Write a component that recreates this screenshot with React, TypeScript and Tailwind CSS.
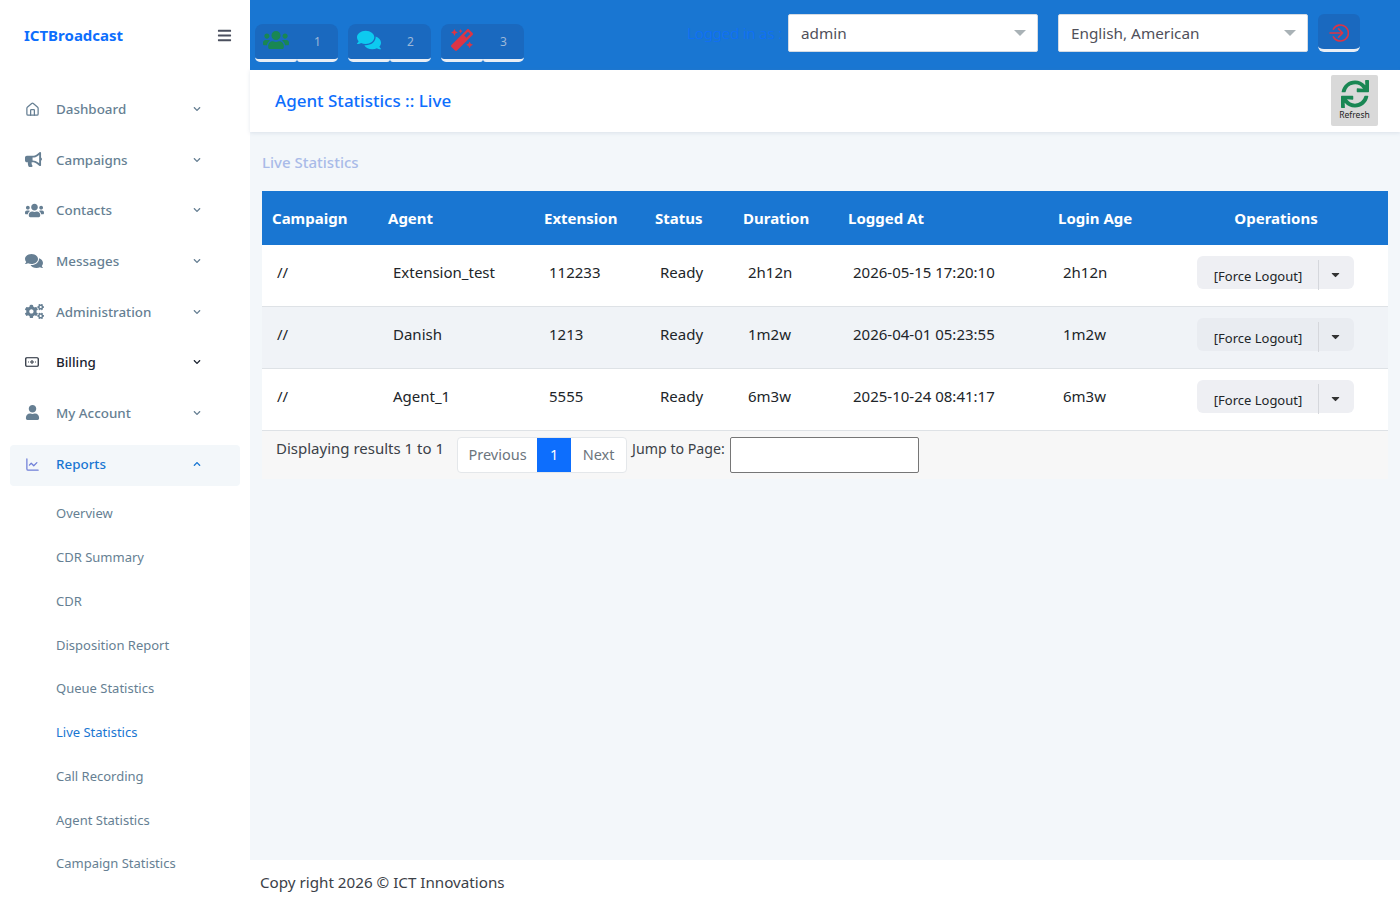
import React from "react";
import { FaBullhorn, FaUsers, FaComments, FaCogs, FaUser, FaMagic, FaSync, FaBars, FaChevronDown, FaChevronUp, FaCaretDown } from "react-icons/fa";
import { LuHouse, LuChartLine } from "react-icons/lu";

const FONT = "font-['Noto_Sans',sans-serif]";

function Billing({ className }: { className?: string }) {
  return (
    <svg viewBox="0 0 14 10" className={className} fill="none" stroke="currentColor">
      <rect x="0.75" y="0.75" width="12.5" height="8.5" rx="1" strokeWidth="1.2" />
      <circle cx="7" cy="5" r="1.2" strokeWidth="1" />
      <path d="M3 5h.8M10.2 5h.8" strokeWidth="1" />
    </svg>
  );
}

function LogoutIcon({ className }: { className?: string }) {
  return (
    <svg viewBox="0 0 20 20" className={className} fill="none" stroke="currentColor" strokeWidth="1.6" strokeLinecap="round" strokeLinejoin="round">
      <path d="M4.4 6.2A8 8 0 1 1 4.4 13.8" />
      <path d="M1 10h12.5M9.5 5.8l4.2 4.2-4.2 4.2" />
    </svg>
  );
}

const nav = [
  { label: "Dashboard", icon: <LuHouse className="w-[15px] h-[15px]" />, },
  { label: "Campaigns", icon: <FaBullhorn className="w-[17px] h-[17px]" /> },
  { label: "Contacts", icon: <FaUsers className="w-[19px] h-[19px]" /> },
  { label: "Messages", icon: <FaComments className="w-[18px] h-[18px]" /> },
  { label: "Administration", icon: <FaCogs className="w-[19px] h-[19px]" /> },
  { label: "Billing", icon: <Billing className="w-[14px] h-[10px]" />, dark: true },
  { label: "My Account", icon: <FaUser className="w-[15px] h-[15px]" /> },
];

const sub = ["Overview", "CDR Summary", "CDR", "Disposition Report", "Queue Statistics", "Live Statistics", "Call Recording", "Agent Statistics", "Campaign Statistics"];

const rows = [
  ["Extension_test", "112233", "Ready", "2h12n", "2026-05-15 17:20:10", "2h12n"],
  ["Danish", "1213", "Ready", "1m2w", "2026-04-01 05:23:55", "1m2w"],
  ["Agent_1", "5555", "Ready", "6m3w", "2025-10-24 08:41:17", "6m3w"],
];

const cols = ["w-[116px]", "w-[156px]", "w-[111px]", "w-[88px]", "w-[105px]", "w-[210px]", "w-[124px]"];

function Pill({ icon, n }: { icon: React.ReactNode; n: string }) {
  return (
    <div className="flex h-[38px]">
      <div className="w-[42px] flex items-center justify-center bg-[#1a69bf] rounded-l-lg rounded-bl-[5px] rounded-br-[3px] border-b-[3px] border-[#e9eef5] pb-1">{icon}</div>
      <div className="w-[41px] flex items-center justify-center bg-[#1a69bf] rounded-r-lg rounded-br-[5px] rounded-bl-[3px] border-b-[3px] border-[#e9eef5] text-[12px] text-[#9db8d8] pt-[1px]">{n}</div>
    </div>
  );
}

function Select({ value }: { value: string }) {
  return (
    <div className="w-[250px] h-[38px] bg-white rounded-[2px] border border-[#d5dbe3] flex items-center justify-between pl-3 pr-[11px] text-[15.3px] text-[#50505a]">
      <span>{value}</span>
      <span className="w-0 h-0 border-l-[6px] border-r-[6px] border-t-[6px] border-l-transparent border-r-transparent border-t-[#a9b2b6]" />
    </div>
  );
}

export default function App() {
  return (
    <div className={`${FONT} flex w-[1400px] h-[900px] overflow-hidden bg-[#f3f7fa]`}>
      <aside className="w-[250px] shrink-0 bg-white flex flex-col">
        <div className="h-[70px] shrink-0 flex items-center justify-between pl-[24px] pr-[18px]">
          <span className="text-[15px] font-bold text-[#0d6efd]">ICTBroadcast</span>
          <FaBars className="w-[15px] h-[15px] text-[#4a4f5e]" />
        </div>
        <nav className="px-[10px] pt-[14px] flex flex-col">
          {nav.map((n) => (
            <div key={n.label} className={`h-[50.6px] flex items-center pl-[15px] pr-[39px] text-[13.4px] font-medium ${n.dark ? "text-[#1b2330]" : "text-[#667f93]"}`}>
              <span className="w-[31px] flex items-center">{n.icon}</span>
              <span className="flex-1">{n.label}</span>
              <FaChevronDown className="w-[8px] h-[8px]" />
            </div>
          ))}
          <div className="h-[41px] mt-[7px] pb-[3px] rounded bg-[#f3f7fa] flex items-center pl-[15px] pr-[39px] text-[13.4px] font-medium text-[#1976d2]">
            <span className="w-[31px] flex items-center text-[#6f7fd8]"><LuChartLine className="w-[15px] h-[15px]" /></span>
            <span className="flex-1">Reports</span>
            <FaChevronUp className="w-[8px] h-[8px]" />
          </div>
          <div className="pt-[6px] flex flex-col">
            {sub.map((s) => (
              <div key={s} className={`h-[43.75px] flex items-center pl-[46px] text-[13px] ${s === "Live Statistics" ? "text-[#1976d2]" : "text-[#667f93]"}`}>{s}</div>
            ))}
          </div>
        </nav>
      </aside>

      <div className="flex-1 min-w-0 flex flex-col">
        <header className="h-[70px] shrink-0 bg-[#1976d2] flex items-center pl-[5px] pr-[40px]">
          <div className="flex gap-[10px] pt-[16px]">
            <Pill icon={<FaUsers className="w-[26px] h-[26px] text-[#198754]" />} n="1" />
            <Pill icon={<FaComments className="w-[24px] h-[24px] text-[#0dcaf0]" />} n="2" />
            <Pill icon={<FaMagic className="w-[22px] h-[22px] text-[#dc3545]" />} n="3" />
          </div>
          <div className="flex-1 text-right pr-[6px] mb-[4px] text-[15px] text-[#0d6efd] font-light">Logged in as :</div>
          <div className="flex items-center gap-[20px] mb-[4px]">
            <Select value="admin" />
            <Select value="English, American" />
          </div>
          <div className="ml-[10px] mb-[4px] pt-[3px] w-[42px] h-[38px] flex items-center justify-center bg-[#1a69bf] rounded-md border-b-[3px] border-[#e9eef5]">
            <LogoutIcon className="w-[20px] h-[20px] text-[#dc3545]" />
          </div>
        </header>

        <div className="h-[62px] shrink-0 bg-white flex items-center justify-between pl-[25px] pr-[22px] shadow-[0_1px_4px_rgba(120,140,170,0.2)]">
          <h1 className="text-[17px] font-medium text-[#0d6efd]">Agent Statistics :: Live</h1>
          <div className="w-[47px] h-[51px] -mt-[1px] bg-[#d9d9d9] rounded-[2px] flex flex-col items-center justify-center">
            <FaSync className="w-[28px] h-[28px] text-[#198754] -mt-[1px]" />
            <span className="text-[8.5px] text-[#222] mt-[1px] leading-[11px]">Refresh</span>
          </div>
        </div>

        <main className="flex-1 min-h-0 pl-[12px] pr-[12px]">
          <h2 className="h-[59px] pt-[19px] text-[15px] font-medium text-[#a9bbe8]">Live Statistics</h2>
          <div className="w-[1126px]">
            <div className="h-[54px] bg-[#1976d2] flex items-center text-[15px] font-bold text-white">
              {["Campaign", "Agent", "Extension", "Status", "Duration", "Logged At", "Login Age"].map((h, i) => (
                <div key={h} className={`${cols[i]} pl-[10px] shrink-0`}>{h}</div>
              ))}
              <div className="flex-1 text-center pr-[8px]">Operations</div>
            </div>
            {rows.map((r, idx) => (
              <div key={r[0]} className={`h-[62px] flex items-center border-b border-[#dee2e6] text-[15px] text-[#212529] pb-[7px] ${idx === 1 ? "bg-[#f0f3f7]" : "bg-white"}`}>
                <div className={`${cols[0]} pl-[15px] shrink-0`}>//</div>
                {r.map((c, i) => (
                  <div key={i} className={`${cols[i + 1]} pl-[15px] shrink-0`}>{c}</div>
                ))}
                <div className="flex-1 flex pl-[25px]">
                  <div className={`w-[157px] h-[33px] rounded-md flex items-center text-[13px] text-[#212529] ${idx === 1 ? "bg-[#e9ecf1]" : "bg-[#eeeff3]"}`}>
                    <span className="flex-1 text-center pt-[9px] pl-[1px]">[Force Logout]</span>
                    <span className="w-[36px] h-[30px] border-l border-[#d5d7dc] flex items-center justify-center mt-[5px] pr-[2px]">
                      <FaCaretDown className="w-[13px] h-[13px] text-[#333] -mt-[1px]" />
                    </span>
                  </div>
                </div>
              </div>
            ))}
            <div className="h-[48px] bg-[#f7f7f7] flex items-start text-[15px] text-[#3b4148] pl-[14px]">
              <span className="pt-[6px]">Displaying results 1 to 1</span>
              <div className="ml-[13px] mt-[6px] h-[36px] flex items-stretch rounded border border-[#e4e7ea] bg-white text-[14.5px] text-[#6c757d] overflow-hidden">
                <span className="w-[79px] flex items-center justify-center">Previous</span>
                <span className="w-[34px] flex items-center justify-center bg-[#0d6efd] text-white">1</span>
                <span className="w-[55px] flex items-center justify-center">Next</span>
              </div>
              <span className="ml-[5px] pt-[7px] text-[14.2px]">Jump to Page:</span>
              <input aria-label="Jump to Page" className="ml-[5px] mt-[6px] w-[189px] h-[36px] bg-white border border-[#767676] rounded-[2px]" />
            </div>
          </div>
        </main>

        <footer className="h-[40px] shrink-0 bg-white flex items-center pl-[10px] pt-[4px] text-[15.2px] text-[#3b4148]">Copy right 2026 © ICT Innovations</footer>
      </div>
    </div>
  );
}
